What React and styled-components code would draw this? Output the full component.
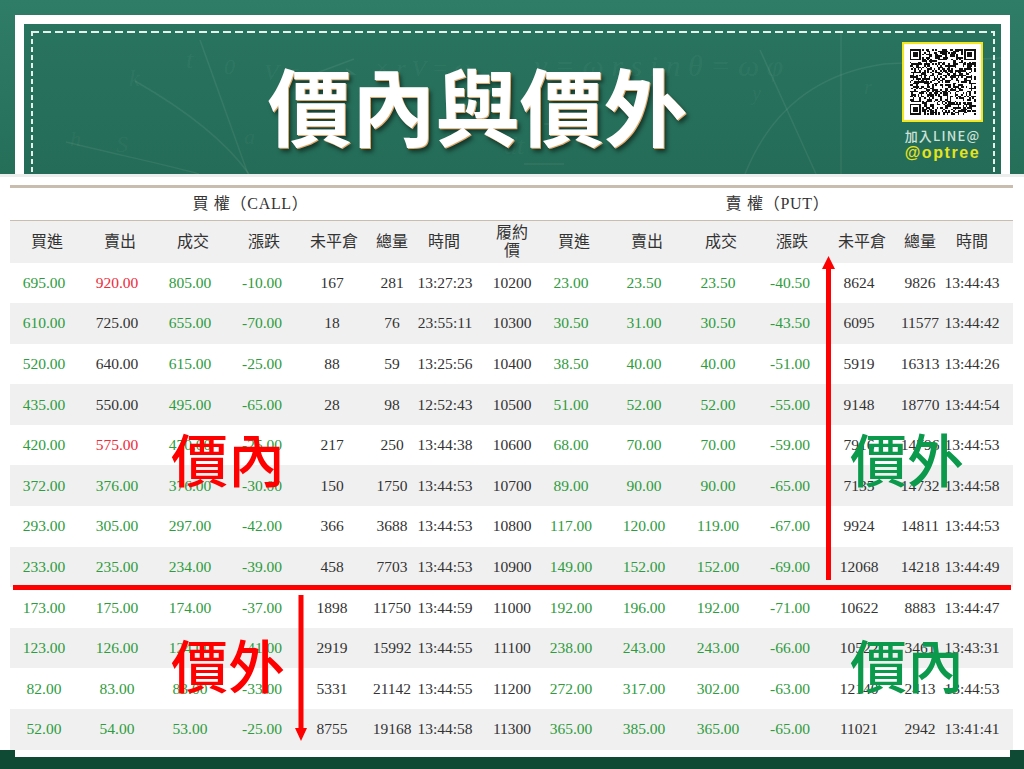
import React from 'react';
import styled, { createGlobalStyle } from 'styled-components';

const SERIF = `"Liberation Serif", "Noto Sans CJK TC", serif`;
const CJK = `"Noto Sans CJK TC", "Liberation Sans", sans-serif`;
// every cell centres its text, so the widths alternate to land on the measured column centres
const COLS = '68px 78px 68px 76px 64px 56px 50px 84px 34px 112px 36px 108px 30px 92px 12px';

const GlobalStyle = createGlobalStyle`
  html, body { margin: 0; padding: 0; background: #fff; }
  body { overflow: hidden; }
`;

const Page = styled.div`
  width: 1024px;
  height: 769px;
  overflow: hidden;
  background: #fff;
  font-family: ${SERIF};
`;

const Banner = styled.header`
  box-sizing: border-box;
  height: 177px;
  padding: 15px 14px 0 15px;
  background: linear-gradient(#2f7c67, #256f59);
  border-bottom: 3px solid #eceeee;
`;
const Frame = styled.div`
  position: relative;
  box-sizing: border-box;
  height: 159px;
  padding: 7px 6px 0 7px;
  border: 9px solid #fff;
  border-bottom: none;
  background: linear-gradient(#29745f, #246c57);
`;
const Chalk = styled.svg`
  position: absolute;
  left: 0;
  top: 0;
  width: 100%;
  height: 100%;
  fill: none;
  stroke: rgba(255, 255, 255, 0.07);
  stroke-width: 1.5;
  text { fill: rgba(255, 255, 255, 0.05); stroke: none; font-family: "Liberation Serif", serif; font-style: italic; }
`;
const Dashed = styled.div`
  position: relative;
  box-sizing: border-box;
  height: 100%;
  display: flex;
  padding: 11px 12px 0 22px;
  background-image:
    repeating-linear-gradient(90deg, #e6f0ec 0 8px, transparent 8px 12px),
    repeating-linear-gradient(180deg, #e6f0ec 0 5px, transparent 5px 8px),
    repeating-linear-gradient(180deg, #e6f0ec 0 5px, transparent 5px 8px);
  background-size: 100% 2px, 2px 100%, 2px 100%;
  background-position: 0 0, 0 0, 100% 0;
  background-repeat: no-repeat;
`;
const Title = styled.h1`
  flex: 1;
  margin: 0;
  padding-top: 18px;
  text-align: center;
  font-family: ${CJK};
  font-size: 84px;
  font-weight: 700;
  line-height: 88px;
  color: #fff;
  text-shadow: 1px 1px 0 #e2a868, 3px 4px 4px rgba(0, 0, 0, 0.5);
`;
const LineBox = styled.aside`
  width: 81px;
  display: flex;
  flex-direction: column;
  align-items: center;
`;
const QrFrame = styled.div`
  box-sizing: border-box;
  width: 81px;
  height: 80px;
  padding: 5px;
  display: flex;
  background: #fff;
  border: 2px solid #f2e71c;
`;
const JoinText = styled.div`
  margin-top: 6px;
  font-family: ${CJK};
  font-size: 13px;
  font-weight: 500;
  letter-spacing: 1.2px;
  line-height: 16px;
  white-space: nowrap;
  color: #cfe2da;
`;
const LineId = styled.div`
  font-family: "Liberation Sans", sans-serif;
  font-size: 16px;
  font-weight: 700;
  letter-spacing: 1.6px;
  line-height: 18px;
  white-space: nowrap;
  color: #e6e31e;
`;

const TableArea = styled.main`
  position: relative;
  width: 1003px;
  margin: 8px 0 0 10px;
  border-top: 3px solid #c8bdae;
  color: #333;
`;
const TitleRow = styled.div`
  display: grid;
  grid-template-columns: 470px 1fr;
  height: 33px;
  padding-bottom: 4px;
  box-sizing: border-box;
  align-items: center;
  border-bottom: 1px solid #c8bdae;
  font-size: 16px;
  letter-spacing: 0.7px;
`;
const SideTitle = styled.div`
  text-align: center;
  padding: ${(p) => (p.$put ? '0 10px 0 72px' : '0 0 0 11px')};
`;
const HeadRow = styled.div`
  display: grid;
  grid-template-columns: ${COLS};
  height: 41.5px;
  align-items: center;
  background: #f0f0f0;
  font-size: 16px;
  line-height: 18px;
`;
// positive $shift moves the label to the right of its column centre
const HeadCell = styled.div`
  display: flex;
  justify-content: center;
  text-align: center;
  white-space: pre;
  position: relative;
  left: ${(p) => p.$shift}px;
`;
const Row = styled.div`
  display: grid;
  grid-template-columns: ${COLS};
  height: 40.6px;
  align-items: center;
  font-size: 15.5px;
  &:nth-child(even) { background: #f0f0f0; }
`;
const TONES = { up: '#2e9c3c', red: '#ee2b3b', plain: '#333' };
const Cell = styled.div`
  display: flex;
  justify-content: center;
  white-space: nowrap;
  color: ${(p) => TONES[p.$tone]};
`;

const AtmLine = styled.div`
  position: absolute;
  left: 3px;
  top: 397px;
  width: 998px;
  height: 5px;
  background: #f00;
`;
const Arrow = styled.svg`
  position: absolute;
  left: ${(p) => p.$left}px;
  top: ${(p) => p.$top}px;
  fill: #f00;
`;
const Zone = styled.div`
  position: absolute;
  left: ${(p) => p.$left}px;
  top: ${(p) => p.$top}px;
  font-family: ${CJK};
  font-size: 57px;
  font-weight: 500;
  line-height: 56px;
  white-space: nowrap;
  color: ${(p) => p.$color};
`;

const Footer = styled.footer`
  height: 20px;
  background: #0e4a34;
`;
const FooterTab = styled.div`
  height: 7px;
  margin: 0 14px 0 15px;
  background: #fff;
`;

const HEADS = ['買進', '賣出', '成交', '漲跌', '未平倉', '總量', '時間', '履約\n價', '買進', '賣出', '成交', '漲跌', '未平倉', '總量', '時間'];
const HEAD_SHIFTS = [3, 3, 3, 2, 2, 0, -1, 0, 3, 3, 3, 2, 3, 0, 0];

const ROWS = [
  ['695.00', '920.00', '805.00', '-10.00', '167', '281', '13:27:23', '10200', '23.00', '23.50', '23.50', '-40.50', '8624', '9826', '13:44:43'],
  ['610.00', '725.00', '655.00', '-70.00', '18', '76', '23:55:11', '10300', '30.50', '31.00', '30.50', '-43.50', '6095', '11577', '13:44:42'],
  ['520.00', '640.00', '615.00', '-25.00', '88', '59', '13:25:56', '10400', '38.50', '40.00', '40.00', '-51.00', '5919', '16313', '13:44:26'],
  ['435.00', '550.00', '495.00', '-65.00', '28', '98', '12:52:43', '10500', '51.00', '52.00', '52.00', '-55.00', '9148', '18770', '13:44:54'],
  ['420.00', '575.00', '470.00', '-25.00', '217', '250', '13:44:38', '10600', '68.00', '70.00', '70.00', '-59.00', '7916', '14796', '13:44:53'],
  ['372.00', '376.00', '376.00', '-30.00', '150', '1750', '13:44:53', '10700', '89.00', '90.00', '90.00', '-65.00', '7135', '14732', '13:44:58'],
  ['293.00', '305.00', '297.00', '-42.00', '366', '3688', '13:44:53', '10800', '117.00', '120.00', '119.00', '-67.00', '9924', '14811', '13:44:53'],
  ['233.00', '235.00', '234.00', '-39.00', '458', '7703', '13:44:53', '10900', '149.00', '152.00', '152.00', '-69.00', '12068', '14218', '13:44:49'],
  ['173.00', '175.00', '174.00', '-37.00', '1898', '11750', '13:44:59', '11000', '192.00', '196.00', '192.00', '-71.00', '10622', '8883', '13:44:47'],
  ['123.00', '126.00', '124.00', '-41.00', '2919', '15992', '13:44:55', '11100', '238.00', '243.00', '243.00', '-66.00', '10522', '3461', '13:43:31'],
  ['82.00', '83.00', '83.00', '-33.00', '5331', '21142', '13:44:55', '11200', '272.00', '317.00', '302.00', '-63.00', '12140', '2413', '13:44:53'],
  ['52.00', '54.00', '53.00', '-25.00', '8755', '19168', '13:44:58', '11300', '365.00', '385.00', '365.00', '-65.00', '11021', '2942', '13:41:41'],
];

// 賣出 of the first rows is not green in the reference
const ASK_TONES = { 0: 'red', 1: 'plain', 2: 'plain', 3: 'plain', 4: 'red' };

function toneOf(rowIndex, colIndex) {
  if (colIndex === 1 && ASK_TONES[rowIndex]) return ASK_TONES[rowIndex];
  if (colIndex < 4 || (colIndex > 7 && colIndex < 12)) return 'up';
  return 'plain';
}

const QR_SIZE = 41;

function finderAt(x, y, ox, oy) {
  const dx = x - ox;
  const dy = y - oy;
  if (dx < 0 || dy < 0 || dx > 6 || dy > 6) return null;
  if (dx === 0 || dy === 0 || dx === 6 || dy === 6) return true;
  return dx >= 2 && dx <= 4 && dy >= 2 && dy <= 4;
}

function buildQrPath() {
  let seed = 0x2f6e2b1;
  let d = '';
  for (let y = 0; y < QR_SIZE; y++) {
    for (let x = 0; x < QR_SIZE; x++) {
      seed = (seed * 1103515245 + 12345) & 0x7fffffff;
      let on = ((seed >> 16) & 1) === 1;
      const inCorner = (x < 8 && y < 8) || (x > QR_SIZE - 9 && y < 8) || (x < 8 && y > QR_SIZE - 9);
      if (inCorner) {
        const a = finderAt(x, y, 0, 0);
        const b = finderAt(x, y, QR_SIZE - 7, 0);
        const c = finderAt(x, y, 0, QR_SIZE - 7);
        on = a === true || b === true || c === true;
      }
      if (on) d += `M${x} ${y}h1v1h-1z`;
    }
  }
  return d;
}

const QR_PATH = buildQrPath();

function QrCode() {
  return (
    <svg viewBox={`0 0 ${QR_SIZE} ${QR_SIZE}`} width="67" height="66" shapeRendering="crispEdges">
      <path d={QR_PATH} fill="#111" />
    </svg>
  );
}

function ChalkMarks() {
  return (
    <Chalk viewBox="0 0 977 150" preserveAspectRatio="none">
      <path d="M111 57 C160 85 200 115 225 150" />
      <path d="M176 16 L224 150" />
      <path d="M42 118 C90 130 140 140 175 150" />
      <path d="M736 26 L792 150" />
      <path d="M721 150 C745 90 790 50 860 40 L977 34" />
      <path d="M817 6 L817 150" />
      <path d="M520 100 h30 M500 140 h40" />
      <path d="M290 50 h40 l-8 -5 M290 50 l40 -15" />
      <text x="105" y="62" fontSize="24">k</text>
      <text x="162" y="44" fontSize="26">t</text>
      <text x="200" y="50" fontSize="22">0</text>
      <text x="240" y="56" fontSize="24">V =</text>
      <text x="350" y="52" fontSize="24">× r  V = ω</text>
      <text x="46" y="122" fontSize="22">h</text>
      <text x="92" y="128" fontSize="24">S</text>
      <text x="220" y="120" fontSize="22">a</text>
      <text x="510" y="52" fontSize="30">v = ω r s i n θ = ω φ</text>
      <text x="728" y="76" fontSize="20">y</text>
      <text x="840" y="70" fontSize="20">r</text>
      <text x="480" y="130" fontSize="26">dt</text>
    </Chalk>
  );
}

export default function App() {
  return (
    <Page>
      <GlobalStyle />
      <Banner>
        <Frame>
          <ChalkMarks />
          <Dashed>
            <Title>價內與價外</Title>
            <LineBox>
              <QrFrame><QrCode /></QrFrame>
              <JoinText>加入LINE@</JoinText>
              <LineId>@optree</LineId>
            </LineBox>
          </Dashed>
        </Frame>
      </Banner>

      <TableArea>
        <TitleRow>
          <SideTitle>買 權（CALL）</SideTitle>
          <SideTitle $put>賣 權（PUT）</SideTitle>
        </TitleRow>
        <HeadRow>
          {HEADS.map((h, i) => (
            <HeadCell key={i} $shift={HEAD_SHIFTS[i]}>{h}</HeadCell>
          ))}
        </HeadRow>
        <div>
          {ROWS.map((row, r) => (
            <Row key={row[7]}>
              {row.map((v, c) => (
                <Cell key={c} $tone={toneOf(r, c)}>{v}</Cell>
              ))}
            </Row>
          ))}
        </div>

        <AtmLine />
        <Arrow $left={812} $top={68} width="13" height="324" viewBox="0 0 13 324">
          <path d="M6.5 0 L13 13 H9 V324 H4 V13 H0 Z" />
        </Arrow>
        <Arrow $left={285} $top={407} width="12" height="146" viewBox="0 0 12 146">
          <path d="M3.5 0 H8.5 V133 H12 L6 146 L0 133 H3.5 Z" />
        </Arrow>
        <Zone $left={161} $top={241} $color="#f00">價內</Zone>
        <Zone $left={161} $top={447} $color="#f00">價外</Zone>
        <Zone $left={840} $top={241} $color="#0b9a4c">價外</Zone>
        <Zone $left={840} $top={447} $color="#0b9a4c">價內</Zone>
      </TableArea>

      <Footer>
        <FooterTab />
      </Footer>
    </Page>
  );
}
